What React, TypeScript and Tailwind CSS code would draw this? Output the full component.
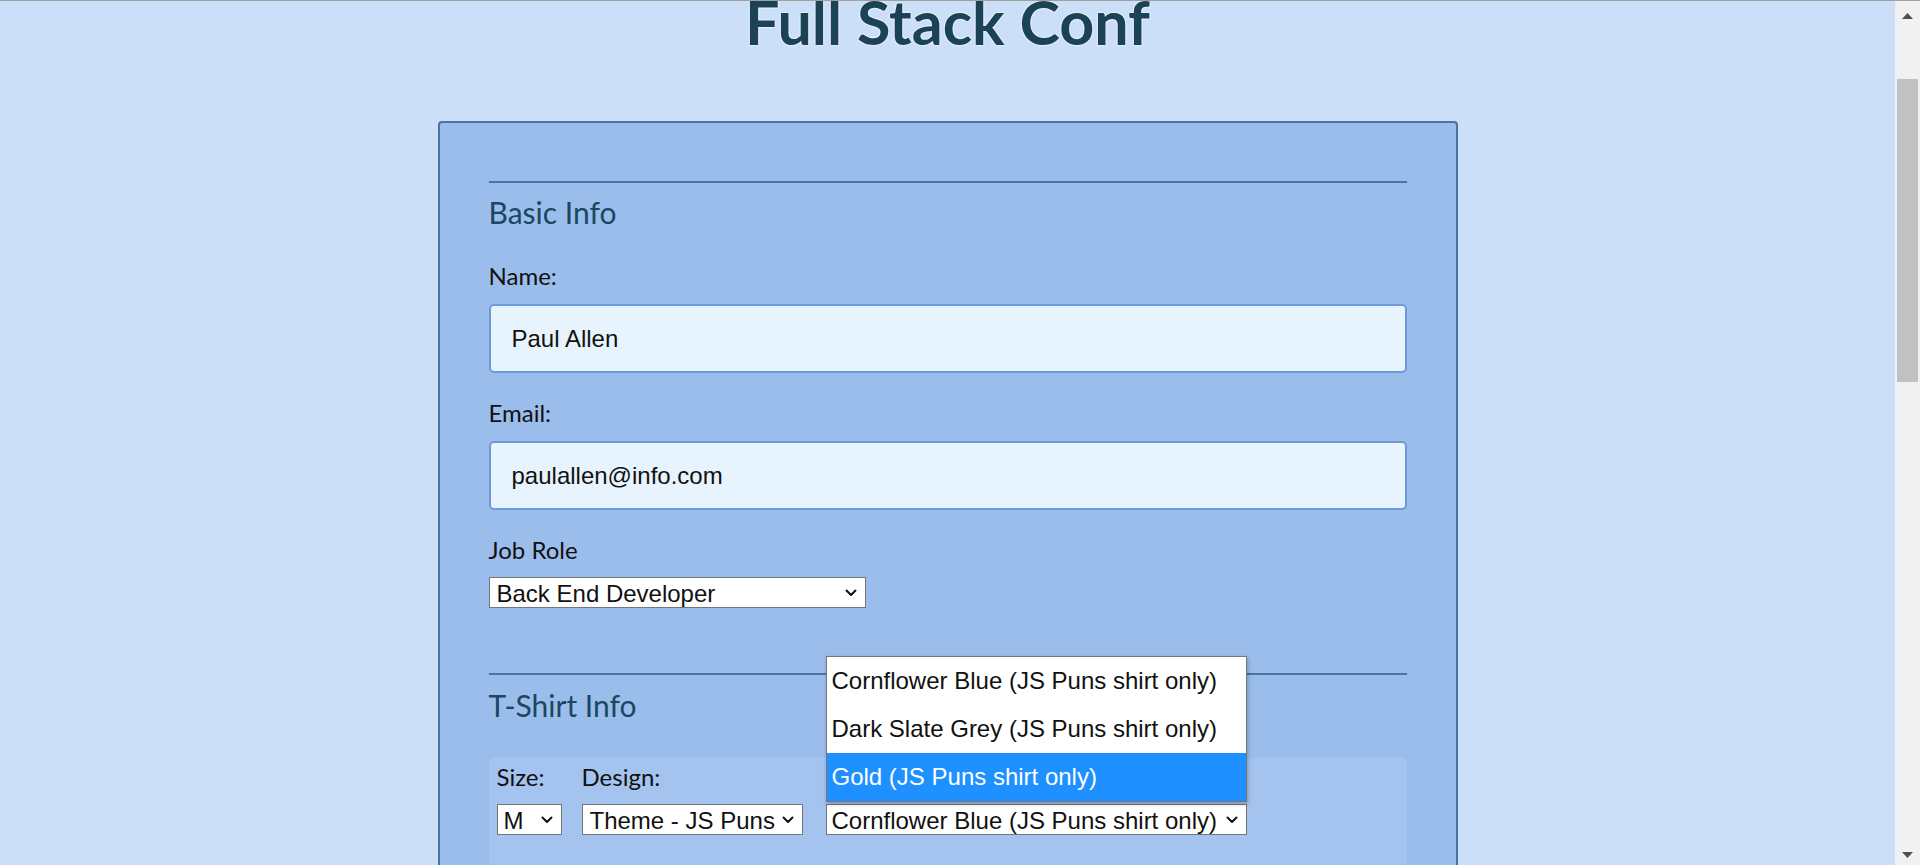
import React from "react";

const Chevron = () => (
  <svg width="12" height="8" viewBox="0 0 12 8" className="shrink-0">
    <path d="M1.5 1.5 L6 6 L10.5 1.5" fill="none" stroke="#111" strokeWidth="2" strokeLinecap="round" strokeLinejoin="round" />
  </svg>
);

function FakeSelect({ text, className, padL }: { text: string; className: string; padL: string }) {
  return (
    <div className={`flex h-[31px] items-center border border-[#767676] bg-white pr-[8px] ${padL} ${className}`}>
      <span className="flex-1 overflow-hidden whitespace-nowrap pt-[2px] font-['Liberation_Sans',Arial,sans-serif] text-[24px] leading-[26px] text-[#111]">
        {text}
      </span>
      <Chevron />
    </div>
  );
}

export default function App() {
  const label = "font-['Lato','Noto_Sans',sans-serif] text-[24px] leading-[24px] text-[#111]";
  const heading = "font-['Lato','Noto_Sans',sans-serif] text-[30px] leading-[30px] text-[#1b4760]";
  const input =
    "flex h-[69px] items-center rounded-[5px] border-2 border-[#6f9ad8] bg-[#e8f4fd] pl-[21px] font-['Liberation_Sans',Arial,sans-serif] text-[24px] leading-[24px] text-[#111]";
  return (
    <div className="flex h-[865px] w-full overflow-hidden border-t border-[#a0a0a0] bg-[#cbdff9]">
      <main className="flex flex-1 flex-col items-center">
        <h1 className="mt-[-10px] font-['Lato','Noto_Sans',sans-serif] text-[61px] font-bold leading-[61px] text-[#1c4257] [text-shadow:0_0_2px_#ffffff,0_0_2px_#ffffff]">
          Full Stack Conf
        </h1>
        <form className="mt-[69px] w-[1020px] flex-1 rounded-[4px] border-2 border-b-0 border-[#4a759f] bg-[#9bbdeb] px-[49px] pt-[58px]">
          <div className="h-[2px] bg-[#4a75a0]" />
          <h2 className={`mt-[14px] ${heading}`}>Basic Info</h2>
          <div className={`mt-[37px] ${label}`}>Name:</div>
          <div className={`mt-[16px] ${input}`}>Paul Allen</div>
          <div className={`mt-[28px] ${label}`}>Email:</div>
          <div className={`mt-[16px] ${input}`}>paulallen@info.com</div>
          <div className={`mt-[28px] ${label}`}>Job Role</div>
          <FakeSelect text="Back End Developer" className="mt-[15px] w-[377px]" padL="pl-[7px]" />
          <div className="mt-[65px] h-[2px] bg-[#4a75a0]" />
          <h2 className={`mt-[15px] ${heading}`}>T-Shirt Info</h2>
          <div className="mt-[38px] flex h-[200px] items-start rounded-[5px] bg-[#a4c3ee] px-[8px] pt-[7px]">
            <div className="flex w-[65px] flex-col">
              <div className={label}>Size:</div>
              <FakeSelect text="M" className="mt-[15px] w-[65px]" padL="pl-[6px]" />
            </div>
            <div className="ml-[20px] flex w-[221px] flex-col">
              <div className={label}>Design:</div>
              <FakeSelect text="Theme - JS Puns" className="mt-[15px] w-[221px]" padL="pl-[7px]" />
            </div>
            <div className="ml-[23px] flex w-[421px] flex-col">
              <div className={label}>Color:</div>
              <div className="relative mt-[15px]">
                <FakeSelect text="Cornflower Blue (JS Puns shirt only)" className="w-[421px]" padL="pl-[5px]" />
                <div className="absolute bottom-[33px] left-0 z-10 w-[421px] border border-[#767676] bg-white shadow-[1px_2px_4px_rgba(0,0,0,0.25)]">
                  {[
                    "Cornflower Blue (JS Puns shirt only)",
                    "Dark Slate Grey (JS Puns shirt only)",
                    "Gold (JS Puns shirt only)",
                  ].map((t, i) => (
                    <div
                      key={t}
                      className={`h-[48px] pl-[5px] font-['Liberation_Sans',Arial,sans-serif] text-[24px] leading-[48px] ${
                        i === 2 ? "bg-[#1e90ff] text-white" : "text-[#111]"
                      }`}
                    >
                      {t}
                    </div>
                  ))}
                </div>
              </div>
            </div>
          </div>
        </form>
      </main>
      <aside className="flex w-[25px] flex-col items-center bg-[#f1f1f1]">
        <div className="flex h-[29px] items-center justify-center">
          <svg width="11" height="6" viewBox="0 0 11 6">
            <path d="M0 6 L5.5 0 L11 6 Z" fill="#505050" />
          </svg>
        </div>
        <div className="mt-[49px] h-[303px] w-[21px] bg-[#c1c1c1]" />
        <div className="flex-1" />
        <div className="flex h-[20px] items-center justify-center">
          <svg width="11" height="6" viewBox="0 0 11 6">
            <path d="M0 0 L11 0 L5.5 6 Z" fill="#505050" />
          </svg>
        </div>
      </aside>
    </div>
  );
}
